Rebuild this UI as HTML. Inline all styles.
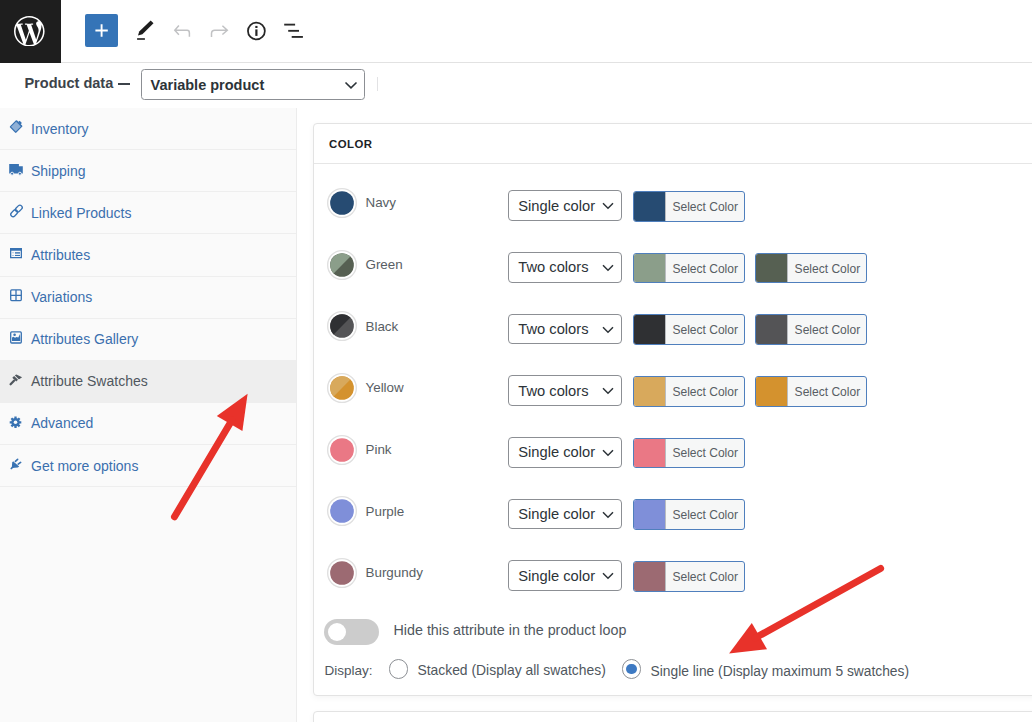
<!DOCTYPE html>
<html><head><meta charset="utf-8">
<style>
*{box-sizing:border-box;margin:0;padding:0}
html,body{width:1032px;height:722px;overflow:hidden;background:#fff;font-family:"Liberation Sans",sans-serif;position:relative}
.abs{position:absolute}
.t{position:absolute;white-space:nowrap;line-height:1}
#hdr{left:0;top:0;width:1032px;height:63px;border-bottom:1px solid #e2e2e2}
#wp{left:0;top:0;width:61px;height:62.5px;background:#1e1e1e}
#plus{left:85.4px;top:14.2px;width:33px;height:33px;background:#3574b7;border-radius:2px}
#side{left:0;top:108px;width:297px;height:615px;background:#fafafa;border-right:1px solid #ececec}
.item{position:absolute;left:0;width:296px;height:42.14px;border-bottom:1px solid #eeeeee}
.item .lbl{position:absolute;left:31px;top:13.5px;font-size:14px;color:#3a6fae;line-height:1;white-space:nowrap}
.item svg{position:absolute;left:9px;top:11px}
.item.act{background:#eeeeee}
.item.act .lbl{color:#50575e}
.card{position:absolute;left:313px;width:760px;border:1px solid #e3e3e3;border-radius:4px;background:#fff;box-shadow:0 2px 6px rgba(0,0,0,.045)}
.nm{position:absolute;left:365.5px;font-size:13.4px;color:#585e64;line-height:1;white-space:nowrap}
.sel{position:absolute;left:508.3px;width:113.5px;height:30.7px;border:1px solid #8c8f94;border-radius:4px;background:#fff}
.sel span{position:absolute;left:9px;top:7.5px;font-size:14.7px;color:#2c3338;line-height:1;white-space:nowrap}
.sel svg{position:absolute;left:93px;top:11px}
.btn{position:absolute;width:112.1px;height:30.5px;border:1px solid #4f7fbd;border-radius:3px;background:#f6f7f7;overflow:hidden}
.btn i{position:absolute;left:0;top:0;width:31.6px;height:100%;border-right:1px solid #b9bcc0}
.btn span{position:absolute;left:38.3px;top:8.8px;font-size:12.05px;color:#585e64;line-height:1;white-space:nowrap}
</style></head><body>

<div id="hdr" class="abs"></div>
<div id="wp" class="abs">
<svg class="abs" style="left:14px;top:15.9px" width="30.6" height="30.6" viewBox="0 0 24 24"><path fill="#fff" d="M21.469 6.825c.84 1.537 1.318 3.3 1.318 5.175 0 3.979-2.156 7.456-5.363 9.325l3.295-9.527c.615-1.54.82-2.771.82-3.864 0-.405-.026-.78-.07-1.11m-7.981.105c.647-.03 1.232-.105 1.232-.105.582-.075.514-.93-.067-.899 0 0-1.755.135-2.88.135-1.064 0-2.85-.15-2.85-.15-.585-.03-.661.855-.075.885 0 0 .54.061 1.125.09l1.68 4.605-2.37 7.08L5.354 6.9c.649-.03 1.234-.1 1.234-.1.585-.075.516-.93-.065-.896 0 0-1.746.138-2.874.138-.2 0-.438-.008-.69-.015C4.911 3.15 8.235 1.215 12 1.215c2.809 0 5.365 1.072 7.286 2.833-.046-.003-.091-.009-.141-.009-1.06 0-1.812.923-1.812 1.914 0 .89.513 1.643 1.06 2.531.411.72.89 1.643.89 2.977 0 .915-.354 1.994-.821 3.479l-1.075 3.585-3.9-11.61.001.014zM12 22.784c-1.059 0-2.081-.153-3.048-.437l3.237-9.406 3.315 9.087c.024.053.05.101.078.149-1.12.393-2.325.609-3.582.609M1.211 12c0-1.564.336-3.05.935-4.39L7.29 21.709C3.694 19.96 1.212 16.271 1.211 12M12 0C5.385 0 0 5.385 0 12s5.385 12 12 12 12-5.385 12-12S18.615 0 12 0"/></svg>
</div>
<div id="plus" class="abs">
<svg class="abs" style="left:0;top:0" width="33" height="33" viewBox="0 0 33 33"><path d="M16.6 10.3v12.4M10.4 16.5h12.4" stroke="#fff" stroke-width="1.9"/></svg>
</div>

<!-- toolbar icons -->
<svg class="abs" style="left:130px;top:15px" width="30" height="30" viewBox="0 0 30 30">
 <path d="M8 20.4 L9.2 16.4 L20.7 5.4 L23.5 8.3 L12.4 19.3 Z" fill="#1e1e1e"/>
 <rect x="7.1" y="23.2" width="7.8" height="1.6" fill="#1e1e1e"/>
</svg>
<svg class="abs" style="left:170px;top:20px" width="24" height="20" viewBox="0 0 24 20">
 <path d="M8.9 5.5 L4.8 10.3 L8.9 14.7 M5 10.3 H17.2 Q19.4 10.3 19.4 13 V16.7" fill="none" stroke="#c1c2c4" stroke-width="1.5"/>
</svg>
<svg class="abs" style="left:207px;top:20px" width="24" height="20" viewBox="0 0 24 20">
 <path d="M15.4 5.7 L20.3 10.2 L15.4 14.5 M20.1 10.2 H7.8 Q4.5 10.2 4.5 13.5 V17" fill="none" stroke="#c1c2c4" stroke-width="1.5"/>
</svg>
<svg class="abs" style="left:244px;top:19px" width="24" height="24" viewBox="0 0 24 24">
 <circle cx="12.4" cy="12" r="8.45" fill="none" stroke="#262626" stroke-width="1.75"/>
 <rect x="11.3" y="10.4" width="2.2" height="6.5" fill="#262626"/>
 <rect x="11.3" y="6.9" width="2.2" height="2.1" fill="#262626"/>
</svg>
<svg class="abs" style="left:280px;top:19px" width="26" height="24" viewBox="0 0 26 24">
 <rect x="4.2" y="4.7" width="10.9" height="1.85" fill="#2a2a2a"/>
 <rect x="8.2" y="10.9" width="10.8" height="1.85" fill="#2a2a2a"/>
 <rect x="11.7" y="17" width="11.2" height="1.85" fill="#2a2a2a"/>
</svg>

<!-- product data row -->
<div class="t" style="left:24.4px;top:75.7px;font-size:14.55px;font-weight:700;color:#3c434a">Product data</div>
<div class="abs" style="left:117.8px;top:83.4px;width:12px;height:1.7px;background:#3c434a"></div>
<div class="abs" style="left:141.3px;top:69.4px;width:223.5px;height:30.4px;border:1px solid #8c8f94;border-radius:3.5px;background:#fff">
 <div class="t" style="left:8.3px;top:7.7px;font-size:14.5px;font-weight:700;color:#2c3338">Variable product</div>
 <svg class="abs" style="left:202px;top:11px" width="14" height="9" viewBox="0 0 14 9"><path d="M1.5 1.5 L7 6.8 L12.5 1.5" fill="none" stroke="#2c3338" stroke-width="1.6"/></svg>
</div>
<div class="abs" style="left:377.3px;top:77px;width:1px;height:14px;background:#e2e2e4"></div>

<!-- sidebar -->
<div id="side" class="abs">
 <div class="item" style="top:0"><span class="lbl">Inventory</span></div>
 <div class="item" style="top:42.14px"><span class="lbl">Shipping</span></div>
 <div class="item" style="top:84.28px"><span class="lbl">Linked Products</span></div>
 <div class="item" style="top:126.42px"><span class="lbl">Attributes</span></div>
 <div class="item" style="top:168.56px"><span class="lbl">Variations</span></div>
 <div class="item" style="top:210.7px"><span class="lbl">Attributes Gallery</span></div>
 <div class="item act" style="top:252.84px"><span class="lbl">Attribute Swatches</span></div>
 <div class="item" style="top:294.98px"><span class="lbl">Advanced</span></div>
 <div class="item" style="top:337.12px"><span class="lbl">Get more options</span></div>
</div>


<!-- sidebar icons -->
<svg class="abs" style="left:0;top:0" width="40" height="500" viewBox="0 0 40 500">
 <g fill="#3872b2">
  <g transform="rotate(45 16.3 126.3)">
   <rect x="11.8" y="121.6" width="9" height="10" rx="1" fill="#3872b2"/>
   <rect x="13" y="123.2" width="6.6" height="7.2" fill="#8fb0d6"/>
   <rect x="14.6" y="119.9" width="3.4" height="2.2" rx=".8" fill="#3872b2"/>
  </g>
  <path d="M9.2 164 H18.9 V166.3 H22.8 V173.6 H9.2 Z"/>
  <circle cx="12.1" cy="173.7" r="1.5" stroke="#fafafa" stroke-width=".9"/>
  <circle cx="19.9" cy="173.7" r="1.5" stroke="#fafafa" stroke-width=".9"/>
  <path d="M10 247.9 H22 V258.3 H10 Z M11.3 250.8 V257 H20.7 V250.8 Z" fill-rule="evenodd"/>
  <rect x="15" y="252.2" width="5" height="1.4"/>
  <rect x="15" y="254.9" width="5" height="1.1"/>
  <rect x="11.8" y="252.4" width="2.4" height=".8" fill="#9bb8da"/>
  <rect x="11.8" y="255" width="2.4" height=".8" fill="#9bb8da"/>
  <circle cx="15.5" cy="422.3" r="4.2"/>
 </g>
 <g fill="none" stroke="#3872b2" stroke-width="1.3">
  <g transform="rotate(45 16.5 210.9)">
   <rect x="14.2" y="203.8" width="4.6" height="7.6" rx="2.3"/>
   <rect x="14.2" y="210.4" width="4.6" height="7.6" rx="2.3"/>
  </g>
  <rect x="10.7" y="289.9" width="10.6" height="10.7" rx="1"/>
  <path d="M16 289.9 V300.6 M10.7 295.3 H21.3"/>
  <rect x="10.7" y="331.9" width="10.6" height="11.1" rx="1"/>
  <path d="M15.5 416.5 V428.1 M9.7 422.3 H21.3 M11.4 418.2 L19.6 426.4 M19.6 418.2 L11.4 426.4" stroke-width="2.3"/>
  <path d="M15.4 461.3 L17.6 459.4 M18.2 464.1 L20.6 462.4" stroke-width="1.7" stroke-linecap="round"/>
  <path d="M11.3 468.5 L13 466.8" stroke-width="1.7" stroke-linecap="round"/>
 </g>
 <g fill="#3872b2">
  <path d="M12 340.9 V337.5 L13.5 336.8 L15 337.8 L16.5 336.9 L18.3 337.5 L20 334 L20.3 340.9 Z"/>
  <circle cx="14.6" cy="334.7" r="1.3"/>
  <path d="M13.1 461.2 L19.2 466.4 L17.8 467.6 L11.8 467.9 L12.2 462.4 Z"/>
 </g>
 <circle cx="15.5" cy="422.3" r="1.8" fill="#fafafa"/>
 <g fill="#50575e">
  <path d="M10.6 384.2 L14 380.8" stroke="#50575e" stroke-width="2.3" stroke-linecap="round"/>
  <path d="M12.3 377.7 L14.1 375.9 L18 379.8 L16.2 381.6 Z"/>
  <path d="M14.8 375.2 L16.4 374.4 L22.1 377.2 L19.6 379.1 L18.7 379.3 Z"/>
 </g>
</svg>
<!-- card -->
<div class="card" style="top:123px;height:573px">
 <div class="abs" style="left:0;top:0;width:100%;height:40.4px;border-bottom:1px solid #e6e6e6"></div>
 <div class="t" style="left:15px;top:15px;font-size:11.4px;font-weight:700;color:#1d2327;letter-spacing:.45px">COLOR</div>
</div>
<div class="card" style="top:711.4px;height:40px"></div>

<!--ROWS-->
<svg class="abs" style="left:321.80px;top:182.90px" width="40" height="40" viewBox="0 0 40 40"><circle cx="20" cy="20" r="14.35" fill="#fff" stroke="#e0e0e0" stroke-width="1.4"/><circle cx="20" cy="20" r="11.85" fill="#264b72"/></svg>
<div class="nm" style="top:196.40px">Navy</div>
<div class="sel" style="top:190.30px"><span>Single color</span><svg width="12" height="8" viewBox="0 0 12 8"><path d="M1 1.2 L6 6.2 L11 1.2" fill="none" stroke="#2c3338" stroke-width="1.5"/></svg></div>
<div class="btn" style="left:633.1px;top:191.10px"><i style="background:#264b72"></i><span>Select Color</span></div>
<svg class="abs" style="left:321.80px;top:244.55px" width="40" height="40" viewBox="0 0 40 40"><circle cx="20" cy="20" r="14.35" fill="#fff" stroke="#e0e0e0" stroke-width="1.4"/><circle cx="20" cy="20" r="11.85" fill="#566052"/><path d="M28.379 11.621 A11.85 11.85 0 0 0 11.621 28.379 Z" fill="#8b9e8a"/></svg>
<div class="nm" style="top:258.05px">Green</div>
<div class="sel" style="top:251.95px"><span>Two colors</span><svg width="12" height="8" viewBox="0 0 12 8"><path d="M1 1.2 L6 6.2 L11 1.2" fill="none" stroke="#2c3338" stroke-width="1.5"/></svg></div>
<div class="btn" style="left:633.1px;top:252.75px"><i style="background:#8b9e8a"></i><span>Select Color</span></div>
<div class="btn" style="left:755.3px;top:252.75px"><i style="background:#566052"></i><span>Select Color</span></div>
<svg class="abs" style="left:321.80px;top:306.20px" width="40" height="40" viewBox="0 0 40 40"><circle cx="20" cy="20" r="14.35" fill="#fff" stroke="#e0e0e0" stroke-width="1.4"/><circle cx="20" cy="20" r="11.85" fill="#545456"/><path d="M28.379 11.621 A11.85 11.85 0 0 0 11.621 28.379 Z" fill="#2f3033"/></svg>
<div class="nm" style="top:319.70px">Black</div>
<div class="sel" style="top:313.60px"><span>Two colors</span><svg width="12" height="8" viewBox="0 0 12 8"><path d="M1 1.2 L6 6.2 L11 1.2" fill="none" stroke="#2c3338" stroke-width="1.5"/></svg></div>
<div class="btn" style="left:633.1px;top:314.40px"><i style="background:#2f3033"></i><span>Select Color</span></div>
<div class="btn" style="left:755.3px;top:314.40px"><i style="background:#545456"></i><span>Select Color</span></div>
<svg class="abs" style="left:321.80px;top:367.85px" width="40" height="40" viewBox="0 0 40 40"><circle cx="20" cy="20" r="14.35" fill="#fff" stroke="#e0e0e0" stroke-width="1.4"/><circle cx="20" cy="20" r="11.85" fill="#d4922e"/><path d="M28.379 11.621 A11.85 11.85 0 0 0 11.621 28.379 Z" fill="#d8a95c"/></svg>
<div class="nm" style="top:381.35px">Yellow</div>
<div class="sel" style="top:375.25px"><span>Two colors</span><svg width="12" height="8" viewBox="0 0 12 8"><path d="M1 1.2 L6 6.2 L11 1.2" fill="none" stroke="#2c3338" stroke-width="1.5"/></svg></div>
<div class="btn" style="left:633.1px;top:376.05px"><i style="background:#d8a95c"></i><span>Select Color</span></div>
<div class="btn" style="left:755.3px;top:376.05px"><i style="background:#d4922e"></i><span>Select Color</span></div>
<svg class="abs" style="left:321.80px;top:429.50px" width="40" height="40" viewBox="0 0 40 40"><circle cx="20" cy="20" r="14.35" fill="#fff" stroke="#e0e0e0" stroke-width="1.4"/><circle cx="20" cy="20" r="11.85" fill="#ea7885"/></svg>
<div class="nm" style="top:443.00px">Pink</div>
<div class="sel" style="top:436.90px"><span>Single color</span><svg width="12" height="8" viewBox="0 0 12 8"><path d="M1 1.2 L6 6.2 L11 1.2" fill="none" stroke="#2c3338" stroke-width="1.5"/></svg></div>
<div class="btn" style="left:633.1px;top:437.70px"><i style="background:#ea7885"></i><span>Select Color</span></div>
<svg class="abs" style="left:321.80px;top:491.15px" width="40" height="40" viewBox="0 0 40 40"><circle cx="20" cy="20" r="14.35" fill="#fff" stroke="#e0e0e0" stroke-width="1.4"/><circle cx="20" cy="20" r="11.85" fill="#7f8fd9"/></svg>
<div class="nm" style="top:504.65px">Purple</div>
<div class="sel" style="top:498.55px"><span>Single color</span><svg width="12" height="8" viewBox="0 0 12 8"><path d="M1 1.2 L6 6.2 L11 1.2" fill="none" stroke="#2c3338" stroke-width="1.5"/></svg></div>
<div class="btn" style="left:633.1px;top:499.35px"><i style="background:#7f8fd9"></i><span>Select Color</span></div>
<svg class="abs" style="left:321.80px;top:552.80px" width="40" height="40" viewBox="0 0 40 40"><circle cx="20" cy="20" r="14.35" fill="#fff" stroke="#e0e0e0" stroke-width="1.4"/><circle cx="20" cy="20" r="11.85" fill="#9c6a72"/></svg>
<div class="nm" style="top:566.30px">Burgundy</div>
<div class="sel" style="top:560.20px"><span>Single color</span><svg width="12" height="8" viewBox="0 0 12 8"><path d="M1 1.2 L6 6.2 L11 1.2" fill="none" stroke="#2c3338" stroke-width="1.5"/></svg></div>
<div class="btn" style="left:633.1px;top:561.00px"><i style="background:#9c6a72"></i><span>Select Color</span></div>
<!--/ROWS-->

<!-- toggle + display -->
<div class="abs" style="left:323.9px;top:618.6px;width:55.4px;height:26.7px;border-radius:13.4px;background:#cccccc"></div>
<div class="abs" style="left:327.7px;top:622.7px;width:18.8px;height:18.8px;border-radius:50%;background:#fff"></div>
<div class="t" style="left:393.5px;top:623.4px;font-size:14.3px;color:#50575e">Hide this attribute in the product loop</div>
<div class="t" style="left:324.4px;top:663.5px;font-size:13.5px;color:#50575e">Display:</div>
<div class="abs" style="left:388.5px;top:659px;width:19.8px;height:19.8px;border-radius:50%;border:1px solid #8c8f94;background:#fff"></div>
<div class="t" style="left:417.4px;top:664.4px;font-size:13.9px;color:#50575e">Stacked (Display all swatches)</div>
<div class="abs" style="left:621.7px;top:659px;width:19.8px;height:19.8px;border-radius:50%;border:1px solid #8c8f94;background:#fff"></div>
<div class="abs" style="left:626.4px;top:663.7px;width:10.4px;height:10.4px;border-radius:50%;background:#3e7ac3"></div>
<div class="t" style="left:650.6px;top:664.5px;font-size:13.8px;color:#50575e">Single line (Display maximum 5 swatches)</div>

<!-- arrows -->
<svg class="abs" style="left:0;top:0" width="1032" height="722" viewBox="0 0 1032 722">
 <g fill="#e8322a" stroke="none">
  <path d="M247.6 393.7 L216.8 416 L242.4 431.1 Z"/>
  <path d="M729.1 653.5 L751.8 622.9 L767 649.2 Z"/>
 </g>
 <g stroke="#e8322a" stroke-width="7" stroke-linecap="round" fill="none">
  <path d="M174.5 516.8 L232 420"/>
  <path d="M880.6 568.5 L755 638"/>
 </g>
</svg>
</body></html>
